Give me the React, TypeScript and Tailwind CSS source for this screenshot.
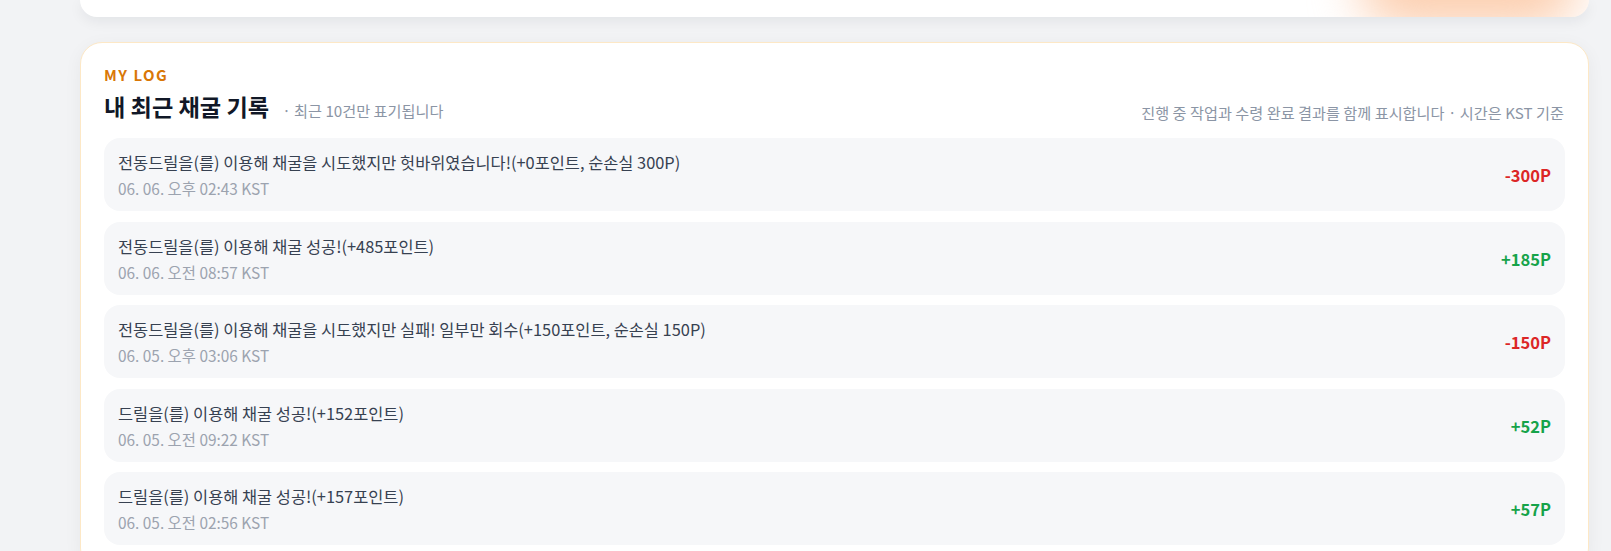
import React from "react";

type LogItem = {
  text: string;
  time: string;
  delta: number;
};

const logs: LogItem[] = [
  {
    text: "전동드릴을(를) 이용해 채굴을 시도했지만 헛바위였습니다!(+0포인트, 순손실 300P)",
    time: "06. 06. 오후 02:43 KST",
    delta: -300,
  },
  {
    text: "전동드릴을(를) 이용해 채굴 성공!(+485포인트)",
    time: "06. 06. 오전 08:57 KST",
    delta: 185,
  },
  {
    text: "전동드릴을(를) 이용해 채굴을 시도했지만 실패! 일부만 회수(+150포인트, 순손실 150P)",
    time: "06. 05. 오후 03:06 KST",
    delta: -150,
  },
  {
    text: "드릴을(를) 이용해 채굴 성공!(+152포인트)",
    time: "06. 05. 오전 09:22 KST",
    delta: 52,
  },
  {
    text: "드릴을(를) 이용해 채굴 성공!(+157포인트)",
    time: "06. 05. 오전 02:56 KST",
    delta: 57,
  },
];

function LogRow({ item }: { item: LogItem }) {
  const plus = item.delta > 0;
  return (
    <div className="flex h-[73px] justify-between rounded-2xl bg-[#f6f7f9] pl-[14px] pr-[14px]">
      <div className="flex flex-col pt-[13px]">
        <span className="text-[16.4px] leading-[23px] text-[#374151]">{item.text}</span>
        <span className="mt-[4px] text-[15.4px] leading-[20px] text-[#9ca3af]">{item.time}</span>
      </div>
      <span
        className={`self-center pt-[2px] text-[16.5px] font-bold leading-none ${
          plus ? "text-[#16a34a]" : "text-[#dc2626]"
        }`}
      >
        {plus ? "+" : "-"}
        {Math.abs(item.delta)}P
      </span>
    </div>
  );
}

export default function App() {
  return (
    <div
      className="h-[551px] overflow-hidden bg-[#f2f3f5] pl-[80px] pr-[22px]"
      style={{ fontFamily: '"Noto Sans CJK KR", "Noto Sans", sans-serif' }}
    >
      {/* previous card, scrolled mostly out of view */}
      <div className="relative h-[17px] overflow-hidden rounded-b-[22px] bg-white shadow-[0_4px_14px_rgba(15,23,42,0.07)]">
        <div className="absolute right-[10px] top-[-62px] h-[90px] w-[220px] rounded-full bg-[#fccfb0] blur-xl" />
      </div>

      <section className="mt-[25px] rounded-[22px] border border-[#fde8c6] bg-white px-[23px] pt-[22px] pb-6 shadow-[0_4px_18px_rgba(15,23,42,0.05)]">
        <div className="text-[15px] font-bold leading-[20px] tracking-[0.1em] text-[#d97706]">
          MY LOG
        </div>
        <div className="mt-[6px] flex items-end justify-between">
          <div className="flex items-end">
            <h2 className="text-[23.2px] font-bold leading-[30px] text-[#111827]">내 최근 채굴 기록</h2>
            <span className="mb-[1px] ml-[13px] text-[15.2px] leading-[20px] text-[#8b95a5]">
              · 최근 10건만 표기됩니다
            </span>
          </div>
          <span className="mb-[-1px] mr-[1px] text-[15.2px] leading-[20px] text-[#8b95a5]">
            진행 중 작업과 수령 완료 결과를 함께 표시합니다 · 시간은 KST 기준
          </span>
        </div>

        <div className="mt-[17px] flex flex-col gap-[10.5px]">
          {logs.map((l, i) => (
            <LogRow key={i} item={l} />
          ))}
        </div>
      </section>
    </div>
  );
}
